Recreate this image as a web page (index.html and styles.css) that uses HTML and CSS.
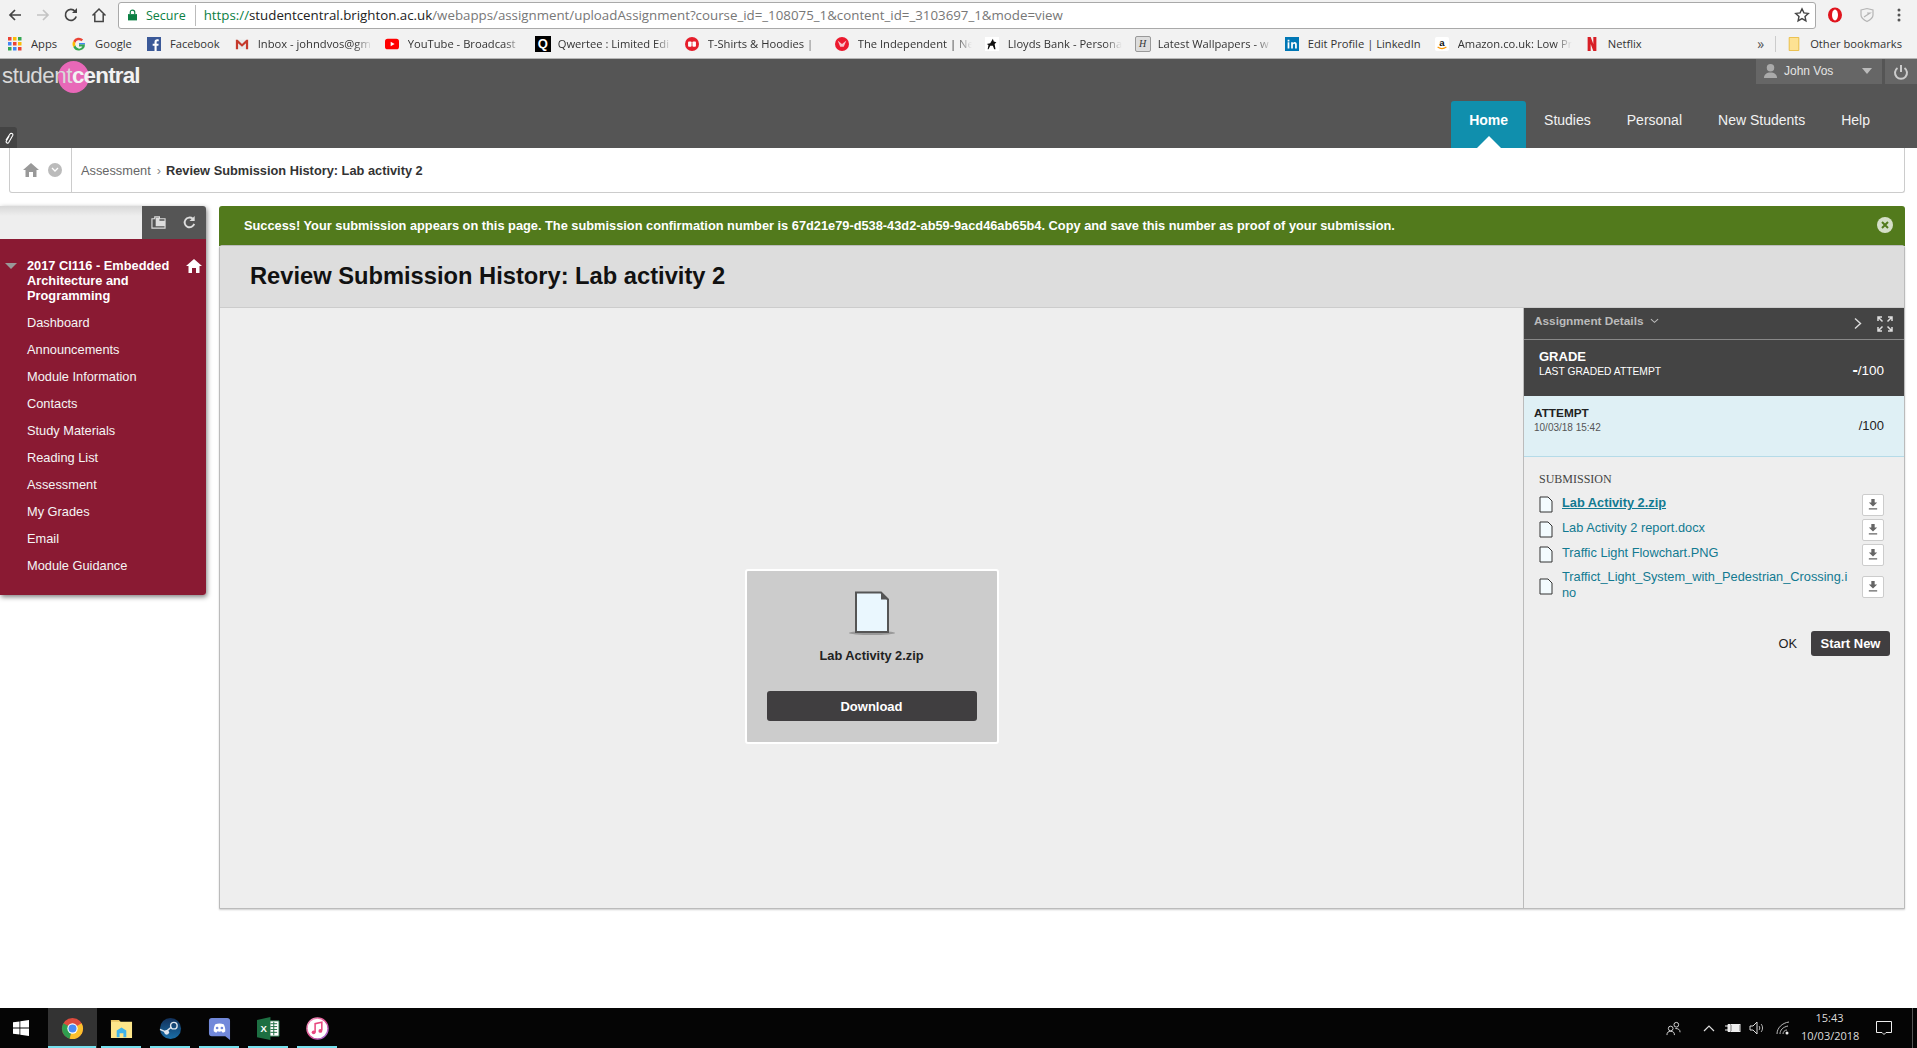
FILE: index.html
```html
<!DOCTYPE html>
<html lang="en">
<head>
    <meta charset="UTF-8">
    <title>Review Submission History: Lab activity 2</title>
    <link rel="stylesheet" href="styles.css">
</head>
<body>
<div class="page">
    <!-- browser toolbar -->
    <div class="toolbar">
        <div class="nav-buttons">
            <svg class="tool" viewBox="0 0 16 16"><path d="M14 8H3M8 3L3 8l5 5" fill="none" stroke="#444" stroke-width="1.7"/></svg>
            <svg class="tool" viewBox="0 0 16 16"><path d="M2 8h11M8 3l5 5-5 5" fill="none" stroke="#c4c4c4" stroke-width="1.7"/></svg>
            <svg class="tool" viewBox="0 0 16 16"><path d="M13.2 9.5A5.5 5.5 0 1 1 12 4.2" fill="none" stroke="#444" stroke-width="1.7"/><path d="M14 1v5H9z" fill="#444"/></svg>
            <svg class="tool" viewBox="0 0 16 16"><path d="M1.5 8.5L8 2l6.500 6.500M3.800 7v7.500h8.400V7" fill="none" stroke="#444" stroke-width="1.500"/></svg>
        </div>
        <div class="omnibox">
            <svg class="lock" viewBox="0 0 10 12"><path d="M0 5h10v7H0z" fill="#0b8043"/><path d="M2.500 5V3a2.500 2.500 0 0 1 5 0v2" fill="none" stroke="#0b8043" stroke-width="1.300"/></svg>
            <span class="secure">Secure</span>
            <span class="url"><span class="url-scheme">https://</span><span class="url-host">studentcentral.brighton.ac.uk</span>/webapps/assignment/uploadAssignment?course_id=_108075_1&amp;content_id=_3103697_1&amp;mode=view</span>
            <svg class="star" viewBox="0 0 16 16"><path d="M8 1.800l1.900 4.100 4.400.5-3.300 3 .9 4.400L8 11.600l-3.900 2.200.9-4.400-3.300-3 4.400-.5z" fill="none" stroke="#444" stroke-width="1.400"/></svg>
        </div>
        <div class="extensions">
            <svg class="ext" viewBox="0 0 16 16"><ellipse cx="8" cy="8" rx="7" ry="7.400" fill="#e0141d"/><ellipse cx="8" cy="8" rx="3" ry="5.400" fill="#fff"/></svg>
            <svg class="ext" viewBox="0 0 16 16"><path d="M2 3l6-1.500L14 3v5c0 3-3 5-6 6.500C5 13 2 11 2 8z" fill="none" stroke="#b5b5b5" stroke-width="1.200"/><path d="M5 10l6-4-3 0" fill="none" stroke="#b5b5b5" stroke-width="1.200"/></svg>
            <svg class="ext" viewBox="0 0 16 16"><circle cx="8" cy="3" r="1.500" fill="#555"/><circle cx="8" cy="8" r="1.500" fill="#555"/><circle cx="8" cy="13" r="1.500" fill="#555"/></svg>
        </div>
    </div>

    <!-- bookmarks -->
    <div class="bookmarks">
        <div class="bookmark">
            <svg class="fav" viewBox="0 0 14 14"><g><rect width="3.500" height="3.500" fill="#ea4335"/><rect x="5" width="3.500" height="3.500" fill="#fbbc05"/><rect x="10" width="3.500" height="3.500" fill="#34a853"/><rect y="5" width="3.500" height="3.500" fill="#4285f4"/><rect x="5" y="5" width="3.500" height="3.500" fill="#ea4335"/><rect x="10" y="5" width="3.500" height="3.500" fill="#fbbc05"/><rect y="10" width="3.500" height="3.500" fill="#34a853"/><rect x="5" y="10" width="3.500" height="3.500" fill="#4285f4"/><rect x="10" y="10" width="3.500" height="3.500" fill="#ea4335"/></g></svg>
            <span class="bookmark-text">Apps</span>
        </div>
        <div class="bookmark">
            <svg class="fav" viewBox="0 0 16 16"><path d="M14.800 8.200H8v2.700h3.900A4.200 4.200 0 0 1 3.900 9.500L1.500 11.400A7 7 0 0 0 14.800 8.200z" fill="#34a853"/><path d="M3.900 9.500a4.200 4.200 0 0 1 0-3L1.500 4.600a7 7 0 0 0 0 6.800z" fill="#fbbc05"/><path d="M3.900 6.500A4.200 4.200 0 0 1 10.700 4.800l2-2A7 7 0 0 0 1.500 4.600z" fill="#ea4335"/><path d="M14.800 8.200c0-.5 0-1-.1-1.400H8v1.400z" fill="#4285f4"/></svg>
            <span class="bookmark-text">Google</span>
        </div>
        <div class="bookmark">
            <svg class="fav" viewBox="0 0 16 16"><rect width="16" height="16" fill="#3b5998"/><path d="M11 16v-6h2l.3-2.400H11V6c0-.7.2-1.100 1.200-1.100h1.200V2.800C13 2.700 12.400 2.700 11.700 2.700c-1.900 0-3.100 1.100-3.100 3.100v1.800H6.500V10h2.100v6z" fill="#fff"/></svg>
            <span class="bookmark-text">Facebook</span>
        </div>
        <div class="bookmark">
            <svg class="fav" viewBox="0 0 16 16"><path d="M1 3h14v11H1z" fill="#e8e8e8"/><path d="M1 14V3h2l5 5 5-5h2v11h-2.500V7L8 11 3.500 7v7z" fill="#c5392b"/></svg>
            <span class="bookmark-text long fade">Inbox - johndvos@gm</span>
        </div>
        <div class="bookmark">
            <svg class="fav" viewBox="0 0 16 16"><rect y="2" width="16" height="12" rx="3" fill="#f00"/><path d="M6.500 5.500v5L11 8z" fill="#fff"/></svg>
            <span class="bookmark-text long fade">YouTube - Broadcast</span>
        </div>
        <div class="bookmark">
            <span class="fav-q">Q</span>
            <span class="bookmark-text long fade">Qwertee : Limited Edi</span>
        </div>
        <div class="bookmark">
            <svg class="fav" viewBox="0 0 16 16"><circle cx="8" cy="8" r="8" fill="#e61e2b"/><rect x="3.500" y="5" width="4" height="6" rx="1" fill="#fff"/><rect x="8.500" y="5" width="4" height="6" rx="1" fill="#fff"/></svg>
            <span class="bookmark-text long fade">T-Shirts &amp; Hoodies |</span>
        </div>
        <div class="bookmark">
            <svg class="fav" viewBox="0 0 16 16"><circle cx="8" cy="8" r="8" fill="#ec1a2e"/><path d="M3 4l5 4 5-4-3 7H6z" fill="#f7c3c9"/></svg>
            <span class="bookmark-text long fade">The Independent | Ne</span>
        </div>
        <div class="bookmark">
            <svg class="fav" viewBox="0 0 16 16"><rect width="16" height="16" fill="#fff"/><path d="M2 8l4-1 3-5 1 3 3 1-2 2 1 6h-1.500L9 10H6l-2 4H3l1-5z" fill="#111"/></svg>
            <span class="bookmark-text long fade">Lloyds Bank - Persona</span>
        </div>
        <div class="bookmark">
            <span class="fav-h">H</span>
            <span class="bookmark-text long fade">Latest Wallpapers - w</span>
        </div>
        <div class="bookmark">
            <svg class="fav" viewBox="0 0 16 16"><rect width="16" height="16" fill="#0077b5"/><path d="M3 6h2v7H3zM3 3h2v2H3zM7 6h2v1c.5-.8 1.200-1.200 2.100-1.200 1.500 0 2.400 1 2.400 3V13h-2V9.200c0-.9-.3-1.500-1.100-1.500S9 8.400 9 9.200V13H7z" fill="#fff"/></svg>
            <span class="bookmark-text long">Edit Profile | LinkedIn</span>
        </div>
        <div class="bookmark">
            <svg class="fav" viewBox="0 0 16 16"><rect width="16" height="16" rx="2" fill="#fff"/><text x="8" y="10" class="fav-a">a</text><path d="M3 11.500c3 2 7 2 10 0" fill="none" stroke="#f90" stroke-width="1.400"/></svg>
            <span class="bookmark-text long fade">Amazon.co.uk: Low Pr</span>
        </div>
        <div class="bookmark">
            <svg class="fav" viewBox="0 0 16 16"><path d="M3 0h3.500l3 8V0H13v16H9.500l-3-8v8H3z" fill="#d81f26"/></svg>
            <span class="bookmark-text">Netflix</span>
        </div>
        <div class="bookmarks-end">
            <span class="more">»</span>
            <span class="bookmarks-sep"></span>
            <svg class="fav folder" viewBox="0 0 12 16"><path d="M.5.500h11v15H.5z" fill="#fde293" stroke="#e8b93c"/></svg>
            <span class="bookmark-text">Other bookmarks</span>
        </div>
    </div>

    <!-- site header -->
    <header class="site-header">
        <div class="logo">
            <span class="logo-dot"></span>
            <span class="logo-text">student<b>central</b></span>
        </div>
        <div class="header-tab">
            <svg viewBox="0 0 10 14" class="link-icon"><path d="M2 9l4-6c1-1.400 3.500-.2 2.700 1.500l-4 7c-.8 1.200-3 .4-2.500-1.300l3-5.200" fill="none" stroke="#fff" stroke-width="1.100"/></svg>
        </div>
        <div class="header-right">
            <div class="user-bar">
                <div class="user-name">
                    <svg class="user-icon" viewBox="0 0 16 16"><circle cx="8" cy="5" r="4" fill="#aaa"/><path d="M1 16c0-4 3-6 7-6s7 2 7 6z" fill="#aaa"/></svg>
                    <span>John Vos</span>
                    <span class="user-caret"></span>
                </div>
                <div class="power">
                    <svg viewBox="0 0 16 16"><path d="M4.500 4a6 6 0 1 0 7 0" fill="none" stroke="#ccc" stroke-width="2"/><path d="M8 1v7" stroke="#ccc" stroke-width="2"/></svg>
                </div>
            </div>
            <nav class="main-nav">
                <a class="nav-item active">Home</a>
                <a class="nav-item">Studies</a>
                <a class="nav-item">Personal</a>
                <a class="nav-item">New Students</a>
                <a class="nav-item">Help</a>
            </nav>
        </div>
    </header>

    <!-- breadcrumbs -->
    <div class="breadcrumbs">
        <div class="crumb-icons">
            <svg class="crumb-home" viewBox="0 0 16 14"><path d="M8 0l8 7h-2.500v7H10V9H6v5H2.500V7H0z" fill="#999"/></svg>
            <span class="crumb-down"><svg viewBox="0 0 8 6"><path d="M1 1l3 3 3-3" fill="none" stroke="#fff" stroke-width="1.300"/></svg></span>
        </div>
        <span class="crumb">Assessment</span>
        <span class="crumb-sep">›</span>
        <span class="crumb-current">Review Submission History: Lab activity 2</span>
    </div>

    <div class="workspace">
        <!-- left menu -->
        <aside class="sidebar">
            <div class="side-tools">
                <div class="side-search"></div>
                <div class="side-btns">
                    <svg class="side-btn" viewBox="0 0 16 14"><path d="M1 13V3h3V1h5v2h6v10z" fill="none" stroke="#ddd" stroke-width="1.200"/><path d="M5 2h4v3h6v6H5z" fill="#ddd"/></svg>
                    <svg class="side-btn" viewBox="0 0 16 16"><path d="M13 9.500A5.200 5.200 0 1 1 11.500 4" fill="none" stroke="#ddd" stroke-width="2"/><path d="M13.500 1v5.500H8z" fill="#ddd"/></svg>
                </div>
            </div>
            <div class="side-menu">
                <div class="course">
                    <span class="course-caret"></span>
                    <span class="course-name">2017 CI116 - Embedded Architecture and Programming</span>
                    <svg class="course-home" viewBox="0 0 16 14"><path d="M8 0l8 7h-2.500v7H10V9H6v5H2.500V7H0z" fill="#fff"/></svg>
                </div>
                <a class="side-link">Dashboard</a>
                <a class="side-link">Announcements</a>
                <a class="side-link">Module Information</a>
                <a class="side-link">Contacts</a>
                <a class="side-link">Study Materials</a>
                <a class="side-link">Reading List</a>
                <a class="side-link">Assessment</a>
                <a class="side-link">My Grades</a>
                <a class="side-link">Email</a>
                <a class="side-link">Module Guidance</a>
            </div>
        </aside>

        <main class="main">
            <div class="alert">
                <span>Success! Your submission appears on this page. The submission confirmation number is 67d21e79-d538-43d2-ab59-9acd46ab65b4. Copy and save this number as proof of your submission.</span>
                <svg class="alert-close" viewBox="0 0 16 16"><circle cx="8" cy="8" r="8" fill="#d5dfc8"/><path d="M5 5l6 6M11 5l-6 6" stroke="#527a1c" stroke-width="2"/></svg>
            </div>
            <section class="panel">
                <h1 class="panel-title">Review Submission History: Lab activity 2</h1>
                <div class="panel-body">
                    <div class="viewer">
                        <div class="file-card">
                            <svg class="file-big" viewBox="0 0 48 46">
                                <ellipse cx="24" cy="42" rx="23" ry="2" fill="#999"/>
                                <path d="M8 1.500h25l7 7v32.500H8z" fill="#eaf7fe" stroke="#555" stroke-width="2"/>
                                <path d="M33 1.500v7h7z" fill="#555"/>
                            </svg>
                            <div class="file-card-name">Lab Activity 2.zip</div>
                            <button class="btn-download">Download</button>
                        </div>
                    </div>
                    <div class="details">
                        <div class="details-head">
                            <span class="details-title">Assignment Details</span>
                            <svg class="details-chev" viewBox="0 0 10 6"><path d="M1 1l4 3.500L9 1" fill="none" stroke="#bbb" stroke-width="1.200"/></svg>
                            <svg class="details-next" viewBox="0 0 8 12"><path d="M1 1l5.500 5L1 11" fill="none" stroke="#ddd" stroke-width="1.400"/></svg>
                            <svg class="details-expand" viewBox="0 0 16 16"><path d="M1 5V1h4M1 1l4.500 4.500M11 1h4v4M15 1l-4.500 4.500M1 11v4h4M1 15l4.500-4.500M15 11v4h-4M15 15l-4.500-4.500" fill="none" stroke="#ddd" stroke-width="1.500"/></svg>
                        </div>
                        <div class="grade">
                            <div>
                                <div class="grade-label">GRADE</div>
                                <div class="grade-sub">LAST GRADED ATTEMPT</div>
                            </div>
                            <div class="grade-score"><b>-</b>/100</div>
                        </div>
                        <div class="attempt">
                            <div>
                                <div class="attempt-label">ATTEMPT</div>
                                <div class="attempt-date">10/03/18 15:42</div>
                            </div>
                            <div class="attempt-score">/100</div>
                        </div>
                        <div class="submission">
                            <div class="submission-title">SUBMISSION</div>
                            <div class="file-row">
                                <svg class="file-small" viewBox="0 0 14 17"><path d="M1 1h8l4 4v11H1z" fill="#f3fbfe" stroke="#333"/></svg>
                                <a class="file-link current">Lab Activity 2.zip</a>
                                <span class="file-dl"><svg viewBox="0 0 12 13"><path d="M4 0h4v4h3L6 9 1 4h3zM1 11h10v1.500H1z" fill="#666"/></svg></span>
                            </div>
                            <div class="file-row">
                                <svg class="file-small" viewBox="0 0 14 17"><path d="M1 1h8l4 4v11H1z" fill="#f3fbfe" stroke="#333"/></svg>
                                <a class="file-link">Lab Activity 2 report.docx</a>
                                <span class="file-dl"><svg viewBox="0 0 12 13"><path d="M4 0h4v4h3L6 9 1 4h3zM1 11h10v1.500H1z" fill="#666"/></svg></span>
                            </div>
                            <div class="file-row">
                                <svg class="file-small" viewBox="0 0 14 17"><path d="M1 1h8l4 4v11H1z" fill="#f3fbfe" stroke="#333"/></svg>
                                <a class="file-link">Traffic Light Flowchart.PNG</a>
                                <span class="file-dl"><svg viewBox="0 0 12 13"><path d="M4 0h4v4h3L6 9 1 4h3zM1 11h10v1.500H1z" fill="#666"/></svg></span>
                            </div>
                            <div class="file-row">
                                <svg class="file-small" viewBox="0 0 14 17"><path d="M1 1h8l4 4v11H1z" fill="#f3fbfe" stroke="#333"/></svg>
                                <a class="file-link">Traffict_Light_System_with_Pedestrian_Crossing.ino</a>
                                <span class="file-dl"><svg viewBox="0 0 12 13"><path d="M4 0h4v4h3L6 9 1 4h3zM1 11h10v1.500H1z" fill="#666"/></svg></span>
                            </div>
                        </div>
                        <div class="details-actions">
                            <a class="btn-ok">OK</a>
                            <button class="btn-start">Start New</button>
                        </div>
                    </div>
                </div>
            </section>
        </main>
    </div>

    <!-- windows taskbar -->
    <footer class="taskbar">
        <svg class="win-logo" viewBox="0 0 16 16"><path d="M0 2.300l6.500-.9v6.200H0zM7.300 1.300L16 0v7.600H7.300zM0 8.400h6.500v6.200L0 13.700zM7.300 8.400H16V16l-8.700-1.200z" fill="#fff"/></svg>
        <div class="task-item active">
            <svg viewBox="0 0 24 24"><circle cx="12" cy="12" r="11" fill="#dd4b3e"/><path d="M12 12L2.500 6.500A11 11 0 0 0 9 22.600z" fill="#2f9e4f"/><path d="M12 12l-3 10.600A11 11 0 0 0 23 12 11 11 0 0 0 21.500 6.500z" fill="#fbc02d"/><circle cx="12" cy="12" r="5.400" fill="#fff"/><circle cx="12" cy="12" r="4.200" fill="#4a8bf5"/></svg>
        </div>
        <div class="task-item">
            <svg viewBox="0 0 24 24"><path d="M1 3h8l2 2h12v17H1z" fill="#fde68a"/><path d="M1 3h8l2 2H1z" fill="#e8c665"/><path d="M7 21v-7l5-3 5 3v7h-3v-4h-4v4z" fill="#3fb4ea"/></svg>
        </div>
        <div class="task-item">
            <svg viewBox="0 0 24 24"><defs><linearGradient id="steamBg" x1="0" y1="0" x2="0" y2="1"><stop offset="0" stop-color="#12305a"/><stop offset="1" stop-color="#1a6fa8"/></linearGradient></defs><circle cx="12" cy="12" r="11" fill="url(#steamBg)"/><circle cx="15.500" cy="9" r="3.400" fill="none" stroke="#dfe6ee" stroke-width="1.500"/><circle cx="8" cy="16" r="2.500" fill="#dfe6ee"/><path d="M1 13l6 2.500 6-5" fill="none" stroke="#dfe6ee" stroke-width="1.500"/></svg>
        </div>
        <div class="task-item">
            <svg viewBox="0 0 24 24"><path d="M4 1h16a3 3 0 0 1 3 3v20l-5-4H4a3 3 0 0 1-3-3V4a3 3 0 0 1 3-3z" fill="#7289da"/><path d="M6 15c-.3-3 .7-6 1.700-7.500 2.500-1 6-1 8.600 0 1 1.500 2 4.500 1.700 7.500-1 1-2 1.300-3 1.300l-.8-1.300c-1.600.5-2.900.5-4.400 0L9 16.300c-1 0-2-.3-3-1.300z" fill="#fff"/><circle cx="9.500" cy="11.500" r="1.400" fill="#7289da"/><circle cx="14.500" cy="11.500" r="1.400" fill="#7289da"/></svg>
        </div>
        <div class="task-item">
            <svg viewBox="0 0 24 24"><path d="M12 4h11v16H12z" fill="#fff" stroke="#1d6f42"/><path d="M14 7h7M14 10h7M14 13h7M14 16h7M17.500 5v14" stroke="#1d6f42"/><path d="M0 3l14-3v24L0 21z" fill="#1d6f42"/><text x="7" y="16" class="xl-x">X</text></svg>
        </div>
        <div class="task-item">
            <svg viewBox="0 0 24 24"><defs><linearGradient id="tunesRing" x1="0" y1="0" x2="1" y2="1"><stop offset="0" stop-color="#f5a3c7"/><stop offset=".5" stop-color="#e04f8f"/><stop offset="1" stop-color="#9b6fe0"/></linearGradient></defs><circle cx="12" cy="12" r="11" fill="#fff" stroke="url(#tunesRing)" stroke-width="1.500"/><path d="M9.500 16V7l7-1.500V14" fill="none" stroke="#e8487f" stroke-width="1.600"/><circle cx="8" cy="16" r="2" fill="#e8487f"/><circle cx="15" cy="14.500" r="2" fill="#e8487f"/></svg>
        </div>
        <div class="tray">
            <svg class="tray-people" viewBox="0 0 16 16"><circle cx="5" cy="8" r="2.500" fill="none" stroke="#ddd"/><path d="M1 15c0-3 1.500-4 4-4s4 1 4 4" fill="none" stroke="#ddd"/><circle cx="11" cy="4" r="2.500" fill="none" stroke="#ddd"/><path d="M10 8c3 0 5 1 5 4" fill="none" stroke="#ddd"/></svg>
            <svg class="tray-caret" viewBox="0 0 12 8"><path d="M1 7l5-5 5 5" fill="none" stroke="#ddd" stroke-width="1.200"/></svg>
            <svg class="tray-battery" viewBox="0 0 16 10"><path d="M0 3h3M0 7h3M3 1.500h2v7H3z" stroke="#eee" fill="#eee"/><rect x="6" y="1.500" width="9" height="7" fill="none" stroke="#eee"/><rect x="6.500" y="2" width="8" height="6" fill="#eee"/></svg>
            <svg class="tray-sound" viewBox="0 0 16 16"><path d="M1 6h3l4-4v12l-4-4H1z" fill="none" stroke="#ddd"/><path d="M10 6c1 1 1 3 0 4M12 4c2 2 2 6 0 8" fill="none" stroke="#bbb"/></svg>
            <svg class="tray-wifi" viewBox="0 0 14 14"><path d="M1 13C1 7 6 2 13 1M4 13c0-4 3-7 8-8M7 13c0-2 1.500-4 4-4" fill="none" stroke="#bbb"/><circle cx="11" cy="12" r="1.500" fill="#eee"/></svg>
            <div class="clock">
                <div>15:43</div>
                <div>10/03/2018</div>
            </div>
            <svg class="tray-action" viewBox="0 0 16 16"><path d="M.5 1.500h15v11H10L8 14.500 6 12.500H.5z" fill="none" stroke="#eee"/></svg>
            <span class="show-desktop"></span>
        </div>
    </footer>
</div>
</body>
</html>
```

FILE: styles.css
```css
* {
    margin: 0;
    padding: 0;
    box-sizing: border-box;
}

body {
    background: #fff;
    font-family: "Liberation Sans", Arial, sans-serif;
    font-size: 12.8px;
    color: #222;
    overflow: hidden;
}

.page {
    display: flex;
    flex-direction: column;
    height: 1048px;
}

/* browser toolbar */
.toolbar {
    display: flex;
    align-items: center;
    height: 30px;
    background: #f2f2f2;
    font-family: "Open Sans", sans-serif;
}

.nav-buttons {
    display: flex;
    gap: 12px;
    width: 118px;
    padding-left: 7px;
}

.tool {
    width: 16px;
    height: 16px;
}

.omnibox {
    display: flex;
    align-items: center;
    width: 1698px;
    height: 27px;
    background: #fff;
    border: 1px solid #a9a9a9;
    border-radius: 3px;
    padding: 0 5px 0 9px;
    font-size: 12.5px;
    white-space: nowrap;
}

.lock {
    width: 9px;
    height: 12px;
    margin-right: 9px;
}

.secure {
    color: #0b8043;
    padding-right: 9px;
    margin-right: 8px;
    border-right: 1px solid #bbb;
    line-height: 21px;
}

.url {
    color: #777;
    flex: 1;
    font-size: 13.3px;
}

.url-scheme {
    color: #0b8043;
}

.url-host {
    color: #222;
}

.star {
    width: 16px;
    height: 16px;
}

.extensions {
    display: flex;
    align-items: center;
    gap: 16px;
    padding-left: 11px;
}

.ext {
    width: 16px;
    height: 16px;
}

/* bookmarks */
.bookmarks {
    display: flex;
    align-items: center;
    height: 29px;
    padding: 0 0 1px 8px;
    background: #f2f2f2;
    border-bottom: 1px solid #b5b5b5;
    font-family: "Open Sans", sans-serif;
    font-size: 11.2px;
    color: #333;
}

.bookmark {
    display: flex;
    align-items: center;
    gap: 9px;
    padding-right: 13px;
    flex: none;
}

.fav {
    width: 14px;
    height: 14px;
    flex: none;
}

.fav-q {
    width: 16px;
    height: 16px;
    margin-right: -2px;
    background: #000;
    color: #fff;
    font: bold 13px/16px "Liberation Sans", sans-serif;
    text-align: center;
}

.fav-h {
    width: 16px;
    height: 16px;
    margin-right: -2px;
    background: #ddd;
    border: 1px solid #999;
    border-radius: 2px;
    color: #333;
    font: italic 10px/14px "Liberation Serif", serif;
    text-align: center;
}

.fav-a {
    font: bold 11px "Liberation Sans", sans-serif;
    text-anchor: middle;
    fill: #111;
}

.bookmark-text {
    padding-right: 2px;
    white-space: nowrap;
    overflow: hidden;
}

.long {
    width: 114px;
}

.fade {
    -webkit-mask-image: linear-gradient(to right, #000 85%, transparent);
    mask-image: linear-gradient(to right, #000 85%, transparent);
}

.bookmarks-end {
    display: flex;
    align-items: center;
    margin-left: auto;
    padding-right: 13px;
}

.more {
    font-size: 14px;
    color: #555;
    margin-right: 11px;
}

.bookmarks-sep {
    width: 1px;
    height: 16px;
    background: #ccc;
    margin-right: 12px;
}

.folder {
    width: 12px;
    height: 14px;
    margin-right: 10px;
}

/* site header */
.site-header {
    position: relative;
    display: flex;
    justify-content: space-between;
    height: 89px;
    background: #555;
}

.logo {
    position: relative;
    padding: 2px 0 0 2px;
}

.logo-dot {
    position: absolute;
    left: 58px;
    top: 2px;
    width: 31px;
    height: 32px;
    border-radius: 50%;
    background: #e868b8;
}

.logo-text {
    position: relative;
    font-size: 22.4px;
    line-height: 30px;
    letter-spacing: -0.5px;
    color: #d9d9d9;
}

.logo-text b {
    color: #f2f2f2;
    letter-spacing: -0.8px;
}

.header-tab {
    position: absolute;
    left: 0;
    bottom: 0;
    width: 17px;
    height: 21px;
    background: #444;
    border-top-right-radius: 3px;
    display: flex;
    align-items: center;
    justify-content: center;
}

.link-icon {
    width: 10px;
    height: 14px;
}

.header-right {
    display: flex;
    flex-direction: column;
    align-items: flex-end;
    justify-content: space-between;
}

.user-bar {
    display: flex;
    gap: 3px;
    height: 25px;
}

.user-name {
    display: flex;
    align-items: center;
    width: 126px;
    padding: 0 8px 2px 7px;
    background: #666;
    color: #e4e4e4;
    font-size: 12px;
}

.user-icon {
    width: 15px;
    height: 15px;
    margin-right: 6px;
}

.user-caret {
    margin-left: auto;
    border-left: 5px solid transparent;
    border-right: 5px solid transparent;
    border-top: 6px solid #bbb;
    margin-right: 2px;
}

.power {
    display: flex;
    align-items: center;
    justify-content: center;
    width: 32px;
    background: #666;
}

.power svg {
    width: 16px;
    height: 16px;
}

.main-nav {
    display: flex;
    padding-right: 29px;
}

.nav-item {
    position: relative;
    height: 47px;
    padding: 0 18px;
    font-size: 14px;
    line-height: 38px;
    color: #f2f2f2;
}

.nav-item.active {
    background: #108fad;
    border-radius: 3px 3px 0 0;
    font-weight: bold;
    color: #fff;
}

.nav-item.active::after {
    content: "";
    position: absolute;
    left: 26px;
    bottom: 0;
    border-left: 12px solid transparent;
    border-right: 12px solid transparent;
    border-bottom: 12px solid #fff;
}

/* breadcrumbs */
.breadcrumbs {
    display: flex;
    align-items: center;
    height: 45px;
    margin: 0 12px 0 9px;
    border: 1px solid #ccc;
    border-top: 0;
    border-radius: 0 0 3px 3px;
    color: #666;
}

.crumb-icons {
    display: flex;
    align-items: center;
    gap: 9px;
    width: 62px;
    height: 100%;
    padding-left: 13px;
    border-right: 1px solid #ccc;
}

.crumb-home {
    width: 16px;
    height: 14px;
}

.crumb-down {
    display: flex;
    align-items: center;
    justify-content: center;
    width: 14px;
    height: 14px;
    border-radius: 50%;
    background: #bbb;
}

.crumb-down svg {
    width: 8px;
    height: 6px;
}

.crumb {
    margin-left: 9px;
    font-size: 12.8px;
}

.crumb-sep {
    margin: 0 5px 0 6px;
    color: #888;
}

.crumb-current {
    font-weight: bold;
    font-size: 12.8px;
    color: #333;
}

/* layout under the breadcrumbs */
.workspace {
    display: flex;
    align-items: flex-start;
    margin-top: 13px;
}

.sidebar {
    width: 206px;
    flex: none;
    border-radius: 0 3px 3px 0;
    box-shadow: 1px 2px 5px rgba(0, 0, 0, 0.5);
}

.side-tools {
    display: flex;
    height: 33px;
}

.side-search {
    flex: 1;
    background: linear-gradient(#d8d8d8, #eee 30%);
}

.side-btns {
    display: flex;
    align-items: center;
    gap: 16px;
    width: 64px;
    padding-left: 9px;
    background: #555;
    border-radius: 0 3px 0 0;
}

.side-btn {
    width: 15px;
    height: 15px;
}

.side-menu {
    display: flex;
    flex-direction: column;
    height: 356px;
    padding-top: 19px;
    background: #8a1a33;
    color: #f5f5f5;
    border-radius: 0 0 3px 0;
}

.course {
    display: flex;
    align-items: flex-start;
    padding: 0 4px 0 5px;
    margin-bottom: 6px;
}

.course-caret {
    flex: none;
    margin: 5px 10px 0 0;
    border-left: 6px solid transparent;
    border-right: 6px solid transparent;
    border-top: 6px solid #999;
}

.course-name {
    flex: 1;
    font-weight: bold;
    line-height: 15px;
    color: #fff;
}

.course-home {
    flex: none;
    width: 16px;
    height: 14px;
    margin-top: 1px;
}

.side-link {
    height: 27px;
    padding-left: 27px;
    line-height: 27px;
    white-space: nowrap;
}

/* main column */
.main {
    width: 1686px;
    margin-left: 13px;
}

.alert {
    display: flex;
    align-items: center;
    justify-content: space-between;
    height: 40px;
    padding: 0 12px 2px 25px;
    background: #527a1c;
    border-radius: 3px 3px 0 0;
    color: #fff;
    font-weight: bold;
}

.alert-close {
    width: 16px;
    height: 16px;
}

.panel {
    height: 664px;
    margin-top: -1px;
    border: 1px solid #bbb;
    border-radius: 3px 3px 0 0;
    background: #eee;
    box-shadow: 0 1px 2px rgba(0, 0, 0, 0.2);
}

.panel-title {
    height: 62px;
    padding-left: 30px;
    background: #ddd;
    border-bottom: 1px solid #ccc;
    font-size: 23.7px;
    line-height: 60px;
    color: #111;
}

.panel-body {
    display: flex;
    height: 600px;
}

.viewer {
    flex: 1;
    display: flex;
    align-items: center;
    justify-content: center;
    padding-top: 97px;
}

.file-card {
    display: flex;
    flex-direction: column;
    align-items: center;
    width: 254px;
    height: 175px;
    padding-top: 20px;
    background: #ccc;
    border: 2px solid #fff;
    border-radius: 3px;
}

.file-big {
    width: 48px;
    height: 46px;
}

.file-card-name {
    margin-top: 11px;
    font-weight: bold;
    color: #222;
}

.btn-download {
    width: 210px;
    height: 30px;
    margin-top: 28px;
    border: 0;
    border-radius: 3px;
    background: #403e40;
    color: #fff;
    font: bold 13px "Liberation Sans", sans-serif;
}

/* assignment details */
.details {
    width: 381px;
    flex: none;
    border-left: 1px solid #bbb;
}

.details-head {
    display: flex;
    align-items: center;
    height: 32px;
    padding: 0 11px 0 10px;
    background: #444;
    border-bottom: 1px solid #888;
}

.details-title {
    font-size: 11.8px;
    font-weight: bold;
    color: #bbb;
    margin-top: -5px;
}

.details-chev {
    width: 9px;
    height: 6px;
    margin: -5px 0 0 7px;
}

.details-next {
    width: 8px;
    height: 13px;
    margin-left: auto;
}

.details-expand {
    width: 16px;
    height: 16px;
    margin-left: 15px;
}

.grade {
    display: flex;
    justify-content: space-between;
    height: 56px;
    padding: 9px 20px 0 15px;
    background: #444;
    color: #fff;
}

.grade-label {
    font-size: 13px;
    font-weight: bold;
    line-height: 15px;
}

.grade-sub {
    font-size: 10.3px;
    line-height: 16px;
}

.grade-score {
    font-size: 13.5px;
    line-height: 15px;
    margin-top: 13px;
}

.grade-score b {
    font-size: 16px;
    line-height: 1;
}

.attempt {
    display: flex;
    justify-content: space-between;
    height: 61px;
    padding: 10px 20px 0 10px;
    background: #dff0f5;
    border-bottom: 1px solid #b5dbe8;
}

.attempt-label {
    font-size: 11.8px;
    font-weight: bold;
    line-height: 15px;
    color: #222;
}

.attempt-date {
    font-size: 10px;
    line-height: 14px;
    color: #555;
}

.attempt-score {
    font-size: 13px;
    line-height: 15px;
    margin-top: 12px;
}

.submission {
    padding: 14px 20px 0 15px;
}

.submission-title {
    font-family: "Liberation Serif", serif;
    font-size: 12px;
    line-height: 16px;
    color: #444;
    margin-bottom: 5px;
}

.file-row {
    display: flex;
    align-items: center;
    gap: 9px;
    min-height: 25px;
}

.file-small {
    width: 14px;
    height: 17px;
    flex: none;
}

.file-link {
    width: 291px;
    padding: 2px 0 6px;
    line-height: 15.5px;
    color: #127a91;
    word-break: break-all;
}

.file-link.current {
    font-weight: bold;
    text-decoration: underline;
}

.file-dl {
    display: flex;
    align-items: center;
    justify-content: center;
    width: 22px;
    height: 22px;
    flex: none;
    margin-left: auto;
    background: #fff;
    border: 1px solid #ccc;
    border-radius: 2px;
}

.file-dl svg {
    width: 10px;
    height: 11px;
}

.details-actions {
    display: flex;
    align-items: center;
    justify-content: flex-end;
    gap: 14px;
    padding: 25px 14px 0 0;
}

.btn-ok {
    color: #222;
}

.btn-start {
    width: 79px;
    height: 25px;
    border: 0;
    border-radius: 3px;
    background: #403e40;
    color: #fff;
    font: bold 13px "Liberation Sans", sans-serif;
}

/* windows taskbar */
.taskbar {
    display: flex;
    align-items: center;
    height: 40px;
    margin-top: auto;
    background: #050505;
    font-family: "Open Sans", sans-serif;
}

.win-logo {
    width: 16px;
    height: 16px;
    margin: 0 19px 0 13px;
}

.task-item {
    display: flex;
    align-items: center;
    justify-content: center;
    width: 49px;
    height: 40px;
    position: relative;
}

.task-item svg {
    width: 23px;
    height: 23px;
}

.task-item::after {
    content: "";
    position: absolute;
    left: 4px;
    right: 5px;
    bottom: 0;
    height: 2px;
    background: #76e0ee;
}

.task-item.active {
    background: #333;
}

.task-item.active::after {
    left: 0;
    right: 1px;
}

.xl-x {
    font: bold 10px "Liberation Sans", sans-serif;
    fill: #fff;
    text-anchor: middle;
}

.tray {
    display: flex;
    align-items: center;
    margin-left: auto;
    height: 100%;
}

.tray-people {
    width: 15px;
    height: 15px;
    margin-right: 22px;
}

.tray-caret {
    width: 12px;
    height: 8px;
    margin-right: 10px;
}

.tray-battery {
    width: 16px;
    height: 10px;
    margin-right: 8px;
}

.tray-sound {
    width: 16px;
    height: 16px;
    margin-right: 11px;
}

.tray-wifi {
    width: 14px;
    height: 14px;
    margin-right: 11px;
}

.clock {
    width: 57px;
    padding-bottom: 2px;
    color: #ddd;
    font-size: 11px;
    line-height: 18px;
    text-align: center;
}

.tray-action {
    width: 16px;
    height: 16px;
    margin: 0 20px 0 18px;
}

.show-desktop {
    width: 1px;
    height: 100%;
    background: #555;
    margin-right: 4px;
}
```
